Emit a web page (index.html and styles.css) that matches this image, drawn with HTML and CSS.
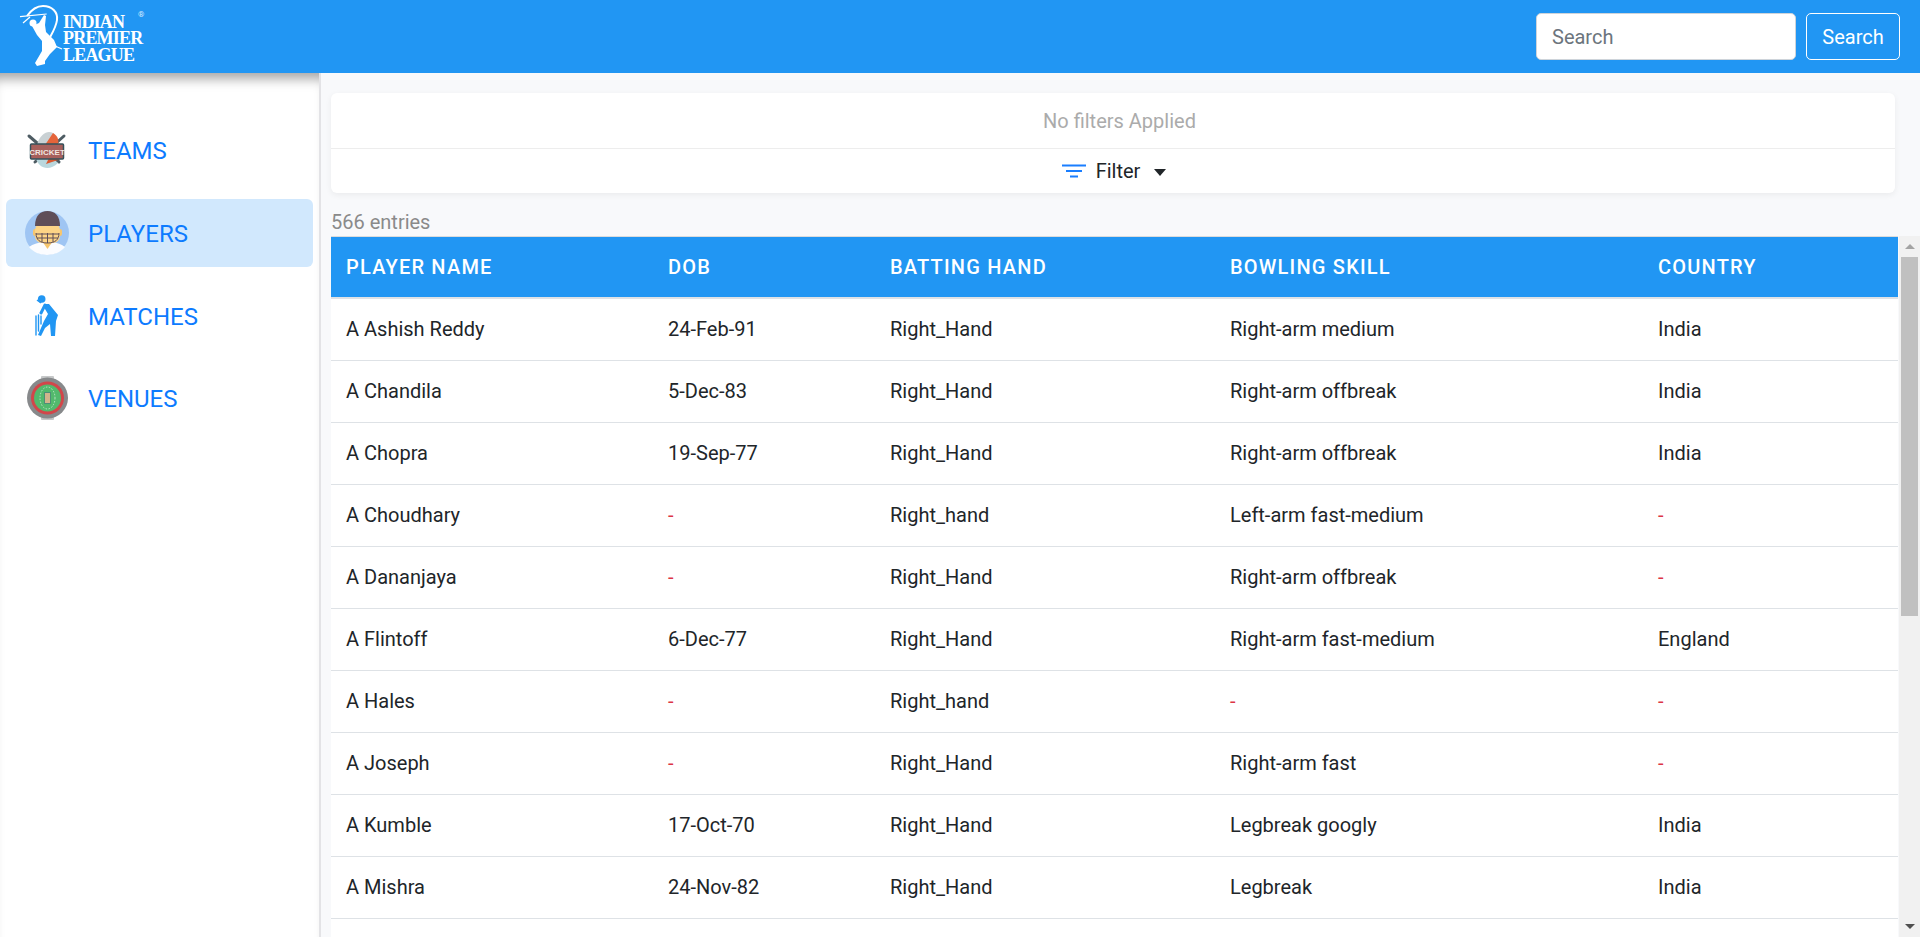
FILE: index.html
```html
<!DOCTYPE html>
<html lang="en">
<head>
<meta charset="utf-8">
<title>Indian Premier League</title>
<link rel="stylesheet" href="styles.css">
</head>
<body>
<header class="navbar">
  <a class="brand" href="#">
    <svg class="brand-mark" viewBox="0 0 44 64" width="44" height="64">
      <path class="mark-line" d="M1 11.700 L27.700 9"/>
      <path class="mark-line" d="M4 18 L11 12"/>
      <path class="mark-arc" d="M8 11 C13 4 19 1 24 1 C33 1 39 7 38 15 C37 23 32 30 29 36"/>
      <circle class="mark-fill" cx="14" cy="18" r="3.500"/>
      <path class="mark-fill" d="M13 21 L20 18 L25 10 L27 11 L26 20 L27 27 L35 35 L38 42 L31 49 L26 56 L26 59 L18 61 L16 58 L23 46 L23 36 L18 30 Z"/>
      <path class="mark-line" d="M36 41 L43 44"/>
    </svg>
    <span class="brand-text"><span>INDIAN</span><span>PREMIER</span><span>LEAGUE</span></span>
    <span class="brand-reg">®</span>
  </a>
  <form class="search">
    <input class="search-input" type="text" placeholder="Search">
    <button class="search-btn" type="button">Search</button>
  </form>
</header>
<div class="layout">
  <nav class="sidebar">
    <a class="nav-item" href="#">
      <svg class="nav-icon" viewBox="0 0 44 44" width="44" height="44">
        <path class="i-bat" d="M4 8 L34 34"/>
        <path class="i-bat" d="M39 8 L10 34"/>
        <path class="i-ball-w" d="M12 17 C14 8 20 4 24 4 C30 4 33 10 32 17 Z"/>
        <path class="i-ball-o" d="M20 17 L28 5 C33 8 34 12 33 17 Z"/>
        <path class="i-sw" d="M11 30 C13 40 24 44 33 35 L27 30 Z"/>
        <path class="i-or" d="M21 36 L36 31 L37 26 L24 30 Z"/>
        <rect class="i-banner" x="5.500" y="16" width="33" height="15" rx="1"/>
        <text class="i-banner-text" x="22" y="26.500">CRICKET</text>
      </svg>
      <span class="nav-label">TEAMS</span>
    </a>
    <a class="nav-item active" href="#">
      <svg class="nav-icon" viewBox="0 0 44 44" width="44" height="44">
        <circle class="p-bg" cx="22" cy="22" r="22"/>
        <path class="p-shirt" d="M4 36 C8 33 13 32 17 31 L28 31 C32 32 36 33 40 36 C36 41 29 44 22 44 C15 44 8 41 4 36 Z"/>
        <path class="p-neck" d="M17 30 L28 30 L22.500 38 Z"/>
        <rect class="p-ear" x="8" y="18" width="29" height="7" rx="2"/>
        <rect class="p-face" x="10" y="12" width="25" height="20" rx="7"/>
        <path class="p-helmet" d="M10 15 C10 5 15 0 22.500 0 C30 0 35 5 35 15 Z"/>
        <path class="p-grille" d="M11 23 H34 M12 27 H33 M17 22 V31 M22.500 22 V32 M28 22 V31 M11 22 C11 29 15 32 22.500 32 C30 32 34 29 34 22"/>
      </svg>
      <span class="nav-label">PLAYERS</span>
    </a>
    <a class="nav-item" href="#">
      <svg class="nav-icon" viewBox="0 0 44 44" width="44" height="44">
        <circle class="m-fill" cx="16.700" cy="5" r="3.800"/>
        <path class="m-line" d="M12 6 L16 9"/>
        <path class="m-fill" d="M19 10 L24 10 L33 21 L31 27 L30 42 L26 42 L25 30 L20 34 L16 42 L13 41 L19 27 L23 20 L20 15 Z"/>
        <path class="m-arm" d="M20 11 L16 19"/>
        <path class="m-line2" d="M11 22 L11 41 M13.500 21 L13.500 37 M16 22 L16 30"/>
      </svg>
      <span class="nav-label">MATCHES</span>
    </a>
    <a class="nav-item" href="#">
      <svg class="nav-icon" viewBox="0 0 44 44" width="44" height="44">
        <rect class="v-stand" x="16" y="0" width="13" height="44" rx="1"/>
        <circle class="v-outer" cx="22.500" cy="22" r="20.500"/>
        <circle class="v-red" cx="22.500" cy="22" r="16.500"/>
        <circle class="v-green" cx="22.500" cy="22" r="13.500"/>
        <ellipse class="v-dash" cx="22.500" cy="22" rx="7.500" ry="11"/>
        <rect class="v-pitch" x="19.500" y="16.500" width="6" height="11"/>
      </svg>
      <span class="nav-label">VENUES</span>
    </a>
  </nav>
  <main class="content">
    <section class="filter-card">
      <div class="filter-status">No filters Applied</div>
      <div class="filter-toggle">
        <svg class="filter-icon" viewBox="0 0 24 14" width="24" height="14">
          <path d="M0 1.500 H24 M4 7 H20 M8 12.500 H16"/>
        </svg>
        <span>Filter</span>
        <span class="caret"></span>
      </div>
    </section>
    <div class="entries">566 entries</div>
    <div class="table-area">
      <div class="table-scroll">
        <table class="players">
          <colgroup>
            <col class="c-name"><col class="c-dob"><col class="c-hand"><col class="c-bowl"><col class="c-country">
          </colgroup>
          <thead>
            <tr><th>PLAYER NAME</th><th>DOB</th><th>BATTING HAND</th><th>BOWLING SKILL</th><th>COUNTRY</th></tr>
          </thead>
          <tbody>
            <tr><td>A Ashish Reddy</td><td>24-Feb-91</td><td>Right_Hand</td><td>Right-arm medium</td><td>India</td></tr>
            <tr><td>A Chandila</td><td>5-Dec-83</td><td>Right_Hand</td><td>Right-arm offbreak</td><td>India</td></tr>
            <tr><td>A Chopra</td><td>19-Sep-77</td><td>Right_Hand</td><td>Right-arm offbreak</td><td>India</td></tr>
            <tr><td>A Choudhary</td><td class="nil">-</td><td>Right_hand</td><td>Left-arm fast-medium</td><td class="nil">-</td></tr>
            <tr><td>A Dananjaya</td><td class="nil">-</td><td>Right_Hand</td><td>Right-arm offbreak</td><td class="nil">-</td></tr>
            <tr><td>A Flintoff</td><td>6-Dec-77</td><td>Right_Hand</td><td>Right-arm fast-medium</td><td>England</td></tr>
            <tr><td>A Hales</td><td class="nil">-</td><td>Right_hand</td><td class="nil">-</td><td class="nil">-</td></tr>
            <tr><td>A Joseph</td><td class="nil">-</td><td>Right_Hand</td><td>Right-arm fast</td><td class="nil">-</td></tr>
            <tr><td>A Kumble</td><td>17-Oct-70</td><td>Right_Hand</td><td>Legbreak googly</td><td>India</td></tr>
            <tr><td>A Mishra</td><td>24-Nov-82</td><td>Right_Hand</td><td>Legbreak</td><td>India</td></tr>
          </tbody>
        </table>
      </div>
      <div class="scrollbar">
        <span class="sb-arrow sb-up"></span>
        <div class="sb-track"><div class="sb-thumb"></div></div>
        <span class="sb-arrow sb-down"></span>
      </div>
    </div>
  </main>
</div>
</body>
</html>
```
FILE: styles.css
```css
* { box-sizing: border-box; }
html, body { margin: 0; height: 100%; }
body {
  display: flex;
  flex-direction: column;
  height: 937px;
  overflow: hidden;
  font-family: Roboto, "Liberation Sans", sans-serif;
  color: #212529;
  background: #f8f9fb;
}
a { text-decoration: none; }

.navbar {
  flex: 0 0 73px;
  display: flex;
  align-items: center;
  justify-content: space-between;
  padding: 0 20px 0 19px;
  background: #2196f3;
}
.brand { position: relative; display: flex; align-items: center; color: #fff; height: 73px; }
.brand-mark { flex: none; }
.brand-text {
  display: flex;
  flex-direction: column;
  font-family: "Liberation Serif", serif;
  font-weight: 700;
  font-size: 18px;
  line-height: 16.500px;
  letter-spacing: -0.800px;
  margin-top: 4px;
}
.brand-reg { position: absolute; left: 119px; top: 10px; font-size: 8px; color: #dbeeff; }
.mark-line { fill: none; stroke: #fff; stroke-width: 1.200; }
.mark-arc { fill: none; stroke: #fff; stroke-width: 2; }
.mark-fill { fill: #fff; }

.search { display: flex; gap: 10px; }
.search-input {
  width: 260px;
  height: 47px;
  padding: 0 15px;
  border: 1px solid #ced4da;
  border-radius: 5px;
  background: #fff;
  font: 20px Roboto, sans-serif;
  color: #495057;
}
.search-input::placeholder { color: #6c757d; opacity: 1; }
.search-btn {
  width: 94px;
  height: 47px;
  padding: 0;
  border: 1px solid #fff;
  border-radius: 5px;
  background: transparent;
  color: #fff;
  font: 20px Roboto, sans-serif;
}

.layout { flex: 1; display: flex; min-height: 0; }
.sidebar {
  flex: 0 0 321px;
  display: flex;
  flex-direction: column;
  gap: 14px;
  padding: 43px 6px 0;
  background: #fff;
  border-right: 2px solid #e3e3e6;
  box-shadow: inset 0 14px 12px -8px rgba(0, 0, 0, .35);
}
.nav-item {
  flex: 0 0 68.670px;
  display: flex;
  align-items: center;
  padding-left: 19px;
  gap: 19px;
  border-radius: 6px;
  color: #0d7bff;
  font-size: 24px;
}
.nav-item.active { background: #d1e8fd; }
.nav-icon { flex: none; }
.nav-label { margin-top: 2px; }

.i-bat { stroke: #4e5c63; stroke-width: 3; stroke-linecap: round; }
.i-ball-w { fill: #c9d1d4; }
.i-ball-o { fill: #e5643a; }
.i-sw { fill: #b9d7dd; }
.i-or { fill: #d9582f; }
.i-banner { fill: #a7605c; stroke: #34505a; stroke-width: 1.500; }
.i-banner-text { font: 700 8px "Liberation Sans", sans-serif; fill: #f1e6e0; text-anchor: middle; }
.p-bg { fill: #9fc5f3; }
.p-shirt { fill: #fbfcff; }
.p-neck { fill: #f7c66e; }
.p-ear { fill: #f7c66e; }
.p-face { fill: #fdd486; }
.p-helmet { fill: #5f4e58; }
.p-grille { fill: none; stroke: #5f4e58; stroke-width: 1; }
.m-fill { fill: #2196f3; }
.m-line { stroke: #2196f3; stroke-width: 1.500; }
.m-arm { stroke: #2196f3; stroke-width: 3; stroke-linecap: round; }
.m-line2 { stroke: #2196f3; stroke-width: 1.400; stroke-linecap: round; }
.v-stand { fill: #c6c8c9; }
.v-outer { fill: #87898b; }
.v-red { fill: #d2464a; }
.v-green { fill: #52b96d; }
.v-dash { fill: none; stroke: #c3e8c9; stroke-width: 1; stroke-dasharray: 1.500 1.500; }
.v-pitch { fill: #d2b48c; stroke: #4d8f78; stroke-width: 1; }

.content {
  flex: 1;
  min-width: 0;
  display: flex;
  flex-direction: column;
  padding: 20px 0 0 10px;
}
.filter-card {
  flex: none;
  width: 1564px;
  height: 100px;
  background: #fff;
  border-radius: 6px;
  box-shadow: 0 2px 6px rgba(0, 0, 0, .06);
  display: flex;
  flex-direction: column;
}
.filter-status {
  flex: 0 0 56px;
  display: flex;
  align-items: center;
  justify-content: center;
  padding-left: 13px;
  border-bottom: 1px solid #ededed;
  font-size: 20px;
  color: #ababab;
}
.filter-toggle {
  flex: 1;
  display: flex;
  align-items: center;
  justify-content: center;
  padding-left: 2px;
  font-size: 20px;
}
.filter-icon { margin-right: 10px; }
.filter-icon path { fill: none; stroke: #1a7eff; stroke-width: 2; }
.caret {
  margin-left: 14px;
  margin-top: 3px;
  border-left: 6px solid transparent;
  border-right: 6px solid transparent;
  border-top: 7px solid #212529;
}
.entries {
  flex: 0 0 43px;
  padding: 17px 0 0;
  font-size: 20px;
  line-height: 24px;
  color: #8a8a8a;
}
.table-area { flex: 1; min-height: 0; display: flex; gap: 1px; }
.table-scroll {
  flex: 0 0 1567px;
  overflow: hidden;
  border-top: 1px solid #dcdcdc;
  background: #fff;
}
.scrollbar {
  flex: 0 0 21px;
  display: flex;
  flex-direction: column;
  background: #f1f1f1;
}
.sb-arrow {
  flex: 0 0 21px;
  display: flex;
  align-items: center;
  justify-content: center;
}
.sb-arrow::before {
  content: "";
  border-left: 5px solid transparent;
  border-right: 5px solid transparent;
}
.sb-up::before { border-bottom: 5px solid #a3a3a3; }
.sb-down::before { border-top: 5px solid #505050; }
.sb-track { flex: 1; min-height: 0; padding: 0 2px; }
.sb-thumb { height: 359px; background: #c0c0c0; }
.players {
  width: 1567px;
  table-layout: fixed;
  border-collapse: collapse;
}
.c-name { width: 322px; }
.c-dob { width: 222px; }
.c-hand { width: 340px; }
.c-bowl { width: 428px; }
.c-country { width: 255px; }
.players th {
  height: 61px;
  padding: 0 15px;
  text-align: left;
  background: #2196f3;
  border-bottom: 2px solid #dee2e6;
  color: #fff;
  font-size: 20px;
  font-weight: 500;
  letter-spacing: 1.200px;
}
.players td {
  height: 62px;
  padding: 0 15px;
  border-bottom: 1px solid #dee2e6;
  font-size: 20px;
}
.players td.nil { color: #dc3545; }
```
